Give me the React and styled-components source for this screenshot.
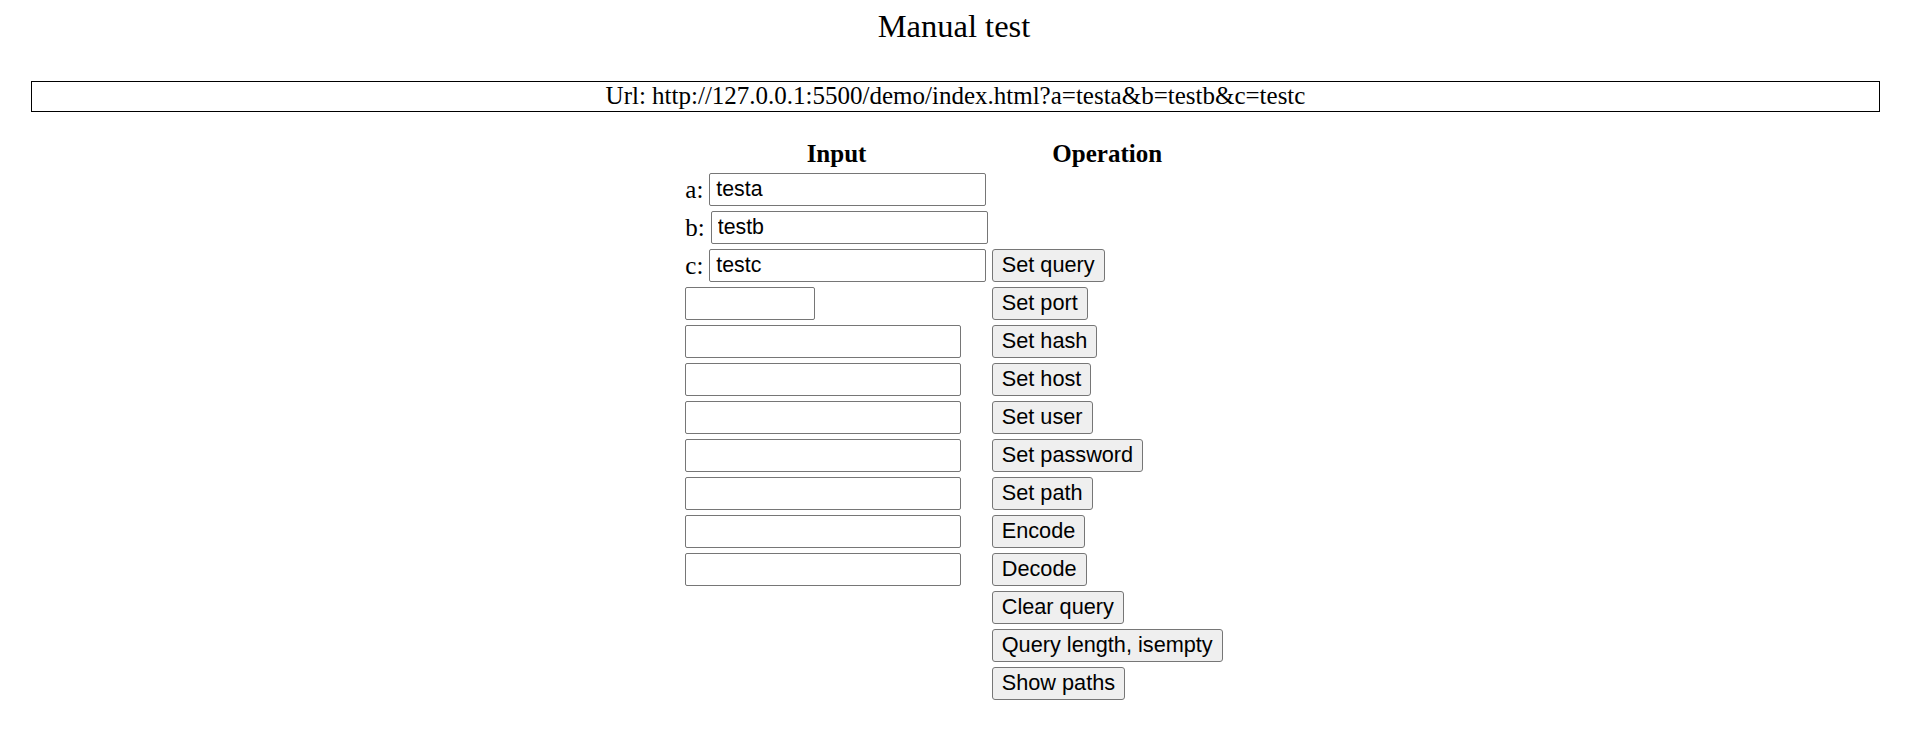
import React from 'react';
import styled, { createGlobalStyle } from 'styled-components';

const rows = [
  { label: 'a', value: 'testa', width: 277 },
  { label: 'b', value: 'testb', width: 277 },
  { label: 'c', value: 'testc', width: 277, button: 'Set query' },
  { width: 130, button: 'Set port' },
  { width: 276, button: 'Set hash' },
  { width: 276, button: 'Set host' },
  { width: 276, button: 'Set user' },
  { width: 276, button: 'Set password' },
  { width: 276, button: 'Set path' },
  { width: 276, button: 'Encode' },
  { width: 276, button: 'Decode' },
  { button: 'Clear query' },
  { button: 'Query length, isempty' },
  { button: 'Show paths' }
];

export default function App() {
  return (
    <>
      <GlobalStyle />
      <Title>Manual test</Title>
      <UrlBox>Url: http://127.0.0.1:5500/demo/index.html?a=testa&amp;b=testb&amp;c=testc</UrlBox>

      <TableWrap>
        <Grid>
          <HeadCell>Input</HeadCell>
          <HeadCell>Operation</HeadCell>

          {rows.map((row, index) => (
            <React.Fragment key={index}>
              <Cell>
                {row.label && <Label>{row.label}:</Label>}
                {row.width && (
                  <Field
                    type="text"
                    $width={row.width}
                    defaultValue={row.value || ''}
                  />
                )}
              </Cell>
              <Cell>{row.button && <Button>{row.button}</Button>}</Cell>
            </React.Fragment>
          ))}
        </Grid>
      </TableWrap>
    </>
  );
}

const GlobalStyle = createGlobalStyle`
  body {
    margin: 8px;
    background: #fff;
    color: #000;
    font-family: 'Liberation Serif', 'Times New Roman', serif;
  }
`;

const Title = styled.div`
  text-align: center;
  font-size: 32.5px;
  line-height: 37px;
  margin-bottom: 36px;
`;

const UrlBox = styled.div`
  margin: 0 20px 0 23px;
  border: 1px solid #000;
  text-align: center;
  font-size: 25px;
  line-height: 28.5px;
  white-space: nowrap;
`;

const TableWrap = styled.div`
  display: flex;
  justify-content: center;
  margin-top: 27px;
`;

const Grid = styled.div`
  display: grid;
  grid-template-columns: auto auto;
  column-gap: 4px;
  row-gap: 5px;
`;

const HeadCell = styled.div`
  font-weight: bold;
  font-size: 25px;
  line-height: 29px;
  text-align: center;
`;

const Cell = styled.div`
  display: flex;
  align-items: center;
  gap: 6px;
  height: 33px;
  font-size: 25px;
`;

const Label = styled.span`
  line-height: 1;
`;

const Field = styled.input`
  box-sizing: border-box;
  width: ${(p) => p.$width}px;
  height: 33px;
  margin: 0;
  padding: 0 6px;
  border: 1px solid #767676;
  border-radius: 2px;
  background: #fff;
  color: #000;
  font-family: 'Liberation Sans', Arial, sans-serif;
  font-size: 21.3px;
`;

const Button = styled.button`
  box-sizing: border-box;
  height: 33px;
  margin: 0;
  padding: 0 9px;
  border: 1px solid #767676;
  border-radius: 3px;
  background: #efefef;
  color: #000;
  font-family: 'Liberation Sans', Arial, sans-serif;
  font-size: 21.7px;
  white-space: nowrap;
`;
